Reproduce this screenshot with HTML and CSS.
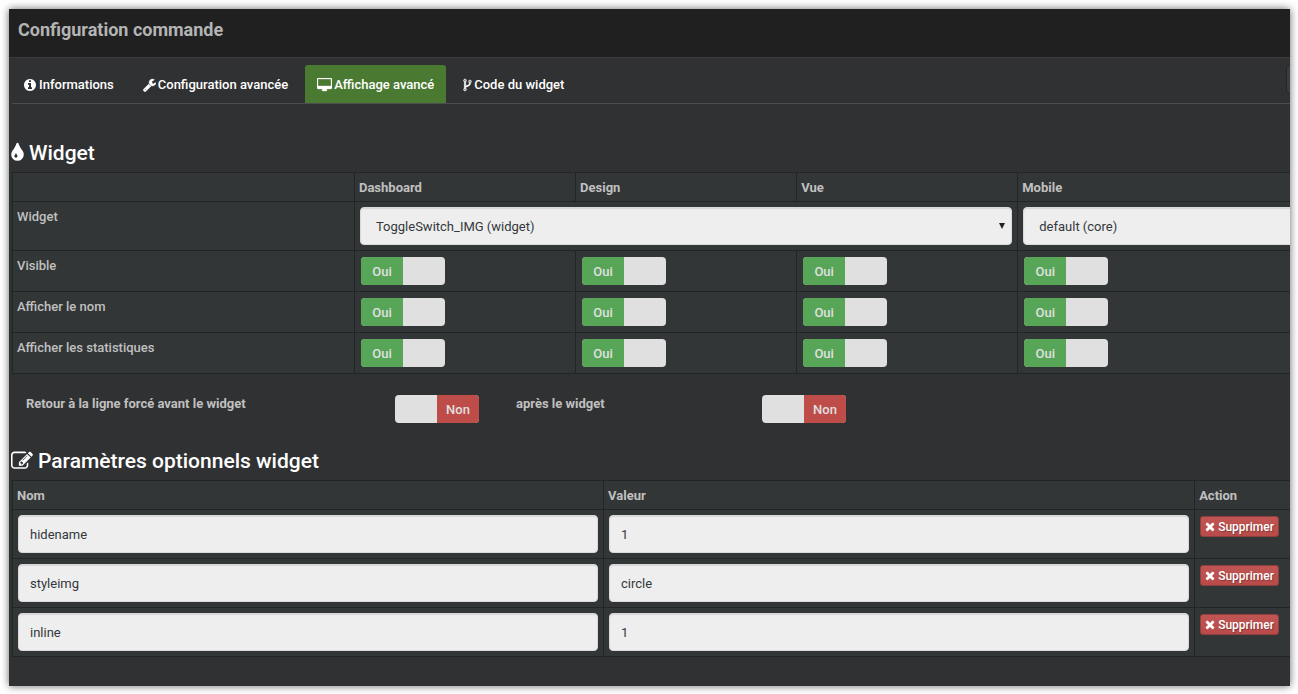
FILE: index.html
```html
<!DOCTYPE html>
<html lang="fr">
<head>
<meta charset="utf-8">
<title>Configuration commande</title>
<link rel="stylesheet" href="styles.css">
</head>
<body>
<svg class="defs" aria-hidden="true">
  <symbol id="info" viewBox="128 0 1536 1792"><path d="M1152 1376v-160q0-14-9-23t-23-9h-96v-512q0-14-9-23t-23-9h-320q-14 0-23 9t-9 23v160q0 14 9 23t23 9h96v320h-96q-14 0-23 9t-9 23v160q0 14 9 23t23 9h448q14 0 23-9t9-23zm-128-896v-160q0-14-9-23t-23-9h-192q-14 0-23 9t-9 23v160q0 14 9 23t23 9h192q14 0 23-9t9-23zm640 416q0 209-103 385.500t-279.500 279.500-385.500 103-385.500-103-279.500-279.500-103-385.500 103-385.500 279.500-279.500 385.500-103 385.500 103 279.500 279.500 103 385.500z"/></symbol>
  <symbol id="wrench" viewBox="64 0 1664 1792"><path d="M448 1472q0-26-19-45t-45-19-45 19-19 45 19 45 45 19 45-19 19-45zm644-420l-682 682q-37 37-90 37-52 0-91-37l-106-108q-38-36-38-90 0-53 38-91l681-681q39 98 114.500 173.500t173.500 114.500zm634-435q0 39-23 106-47 134-164.500 217.500t-258.500 83.500q-185 0-316.500-131.500t-131.500-316.500 131.500-316.500 316.500-131.500q58 0 121.500 16.500t107.500 46.500q16 11 16 28t-16 28l-293 169v224l193 107q5-3 79-48.500t135.500-81 70.500-35.500q15 0 23.500 10t8.500 25z"/></symbol>
  <symbol id="desktop" viewBox="-64 0 1920 1792"><path d="M1728 992v-832q0-13-9.500-22.500t-22.500-9.500h-1600q-13 0-22.500 9.500t-9.500 22.500v832q0 13 9.500 22.500t22.500 9.500h1600q13 0 22.500-9.500t9.500-22.500zm128-832v1088q0 66-47 113t-113 47h-544q0 37 16 77.500t32 71 16 43.500q0 26-19 45t-45 19h-512q-26 0-45-19t-19-45q0-14 16-44t32-70 16-78h-544q-66 0-113-47t-47-113v-1088q0-66 47-113t113-47h1600q66 0 113 47t47 113z"/></symbol>
  <symbol id="fork" viewBox="384 0 1024 1792"><path d="M672 1472q0-40-28-68t-68-28-68 28-28 68 28 68 68 28 68-28 28-68zm0-1152q0-40-28-68t-68-28-68 28-28 68 28 68 68 28 68-28 28-68zm640 128q0-40-28-68t-68-28-68 28-28 68 28 68 68 28 68-28 28-68zm96 0q0 52-26 96.500t-70 69.500q-2 287-226 414-67 38-203 81-128 40-169.500 71t-41.500 100v26q44 25 70 69.500t26 96.500q0 80-56 136t-136 56-136-56-56-136q0-52 26-96.500t70-69.500v-820q-44-25-70-69.500t-26-96.500q0-80 56-136t136-56 136 56 56 136q0 52-26 96.500t-70 69.500v497q54-26 154-57 55-17 87.500-29.500t70.500-31 59-39.500 40.500-51 28-69.500 8.500-91.500q-44-25-70-69.500t-26-96.500q0-80 56-136t136-56 136 56 56 136z"/></symbol>
  <symbol id="drop" viewBox="384 0 1024 1792"><path d="M896 1152q0-36-20-69-1-1-15.500-22.500t-25.500-38-25-44-21-50.500q-4-16-21-16t-21 16q-7 23-21 50.500t-25 44-25.500 38-15.500 22.500q-20 33-20 69 0 53 37.500 90.500t90.500 37.500 90.500-37.500 37.500-90.500zm512-128q0 212-150 362t-362 150-362-150-150-362q0-145 81-275 6-9 62.500-90.500t101-151 99.500-178 83-201.500q9-30 34-47t51-17 51.500 17 33.500 47q28 93 83 201.500t99.500 178 101 151 62.500 90.500q81 127 81 275z"/></symbol>
  <symbol id="edit" viewBox="0 0 1792 1792"><path d="M888 1184l116-116-152-152-116 116v56h96v96h56zm440-720q-16-16-33 1l-350 350q-17 17-1 33t33-1l350-350q17-17 1-33zm80 594v190q0 119-84.500 203.500t-203.500 84.500h-832q-119 0-203.500-84.500t-84.500-203.500v-832q0-119 84.500-203.500t203.500-84.500h832q63 0 117 25 15 7 18 23 3 17-9 29l-49 49q-14 14-32 8-23-6-45-6h-832q-66 0-113 47t-47 113v832q0 66 47 113t113 47h832q66 0 113-47t47-113v-126q0-13 9-22l64-64q15-15 35-7t20 29zm-96-738l288 288-672 672h-288v-288zm444 132l-92 92-288-288 92-92q28-28 68-28t68 28l152 152q28 28 28 68t-28 68z"/></symbol>
  <symbol id="times" viewBox="240 0 1312 1792"><path d="M1490 1322q0 40-28 68l-136 136q-28 28-68 28t-68-28l-294-294-294 294q-28 28-68 28t-68-28l-136-136q-28-28-28-68t28-68l294-294-294-294q-28-28-28-68t28-68l136-136q28-28 68-28t68 28l294 294 294-294q28-28 68-28t68 28l136 136q28 28 28 68t-28 68l-294 294 294 294q28 28 28 68z"/></symbol>
</svg>
<main class="dialog">
  <header class="titlebar"><h1 class="title">Configuration commande</h1></header>
  <div class="content">
    <nav class="tabs">
      <a class="tab" href="#info-tab"><svg class="icon w-info"><use href="#info"/></svg>Informations</a>
      <a class="tab" href="#config-tab"><svg class="icon w-wrench"><use href="#wrench"/></svg>Configuration avancée</a>
      <a class="tab active" href="#display-tab"><svg class="icon w-desktop"><use href="#desktop"/></svg>Affichage avancé</a>
      <a class="tab" href="#code-tab"><svg class="icon w-fork"><use href="#fork"/></svg>Code du widget</a>
      <button class="action" type="button" aria-label="Enregistrer"></button>
    </nav>

    <section class="section">
      <h2 class="heading"><svg class="big-icon w-drop"><use href="#drop"/></svg>Widget</h2>
      <table class="grid display">
        <colgroup><col class="c-name"><col class="c-view"><col class="c-view"><col class="c-view"><col></colgroup>
        <thead>
          <tr><th></th><th>Dashboard</th><th>Design</th><th>Vue</th><th>Mobile</th></tr>
        </thead>
        <tbody>
          <tr>
            <td>Widget</td>
            <td colspan="3"><div class="select"><select class="field" aria-label="Widget dashboard"><option>ToggleSwitch_IMG (widget)</option></select></div></td>
            <td><div class="select"><select class="field" aria-label="Widget mobile"><option>default (core)</option></select></div></td>
          </tr>
          <tr>
            <td>Visible</td>
            <td><label class="switch"><input type="checkbox" checked><span class="on">Oui</span></label></td>
            <td><label class="switch"><input type="checkbox" checked><span class="on">Oui</span></label></td>
            <td><label class="switch"><input type="checkbox" checked><span class="on">Oui</span></label></td>
            <td><label class="switch"><input type="checkbox" checked><span class="on">Oui</span></label></td>
          </tr>
          <tr>
            <td>Afficher le nom</td>
            <td><label class="switch"><input type="checkbox" checked><span class="on">Oui</span></label></td>
            <td><label class="switch"><input type="checkbox" checked><span class="on">Oui</span></label></td>
            <td><label class="switch"><input type="checkbox" checked><span class="on">Oui</span></label></td>
            <td><label class="switch"><input type="checkbox" checked><span class="on">Oui</span></label></td>
          </tr>
          <tr>
            <td>Afficher les statistiques</td>
            <td><label class="switch"><input type="checkbox" checked><span class="on">Oui</span></label></td>
            <td><label class="switch"><input type="checkbox" checked><span class="on">Oui</span></label></td>
            <td><label class="switch"><input type="checkbox" checked><span class="on">Oui</span></label></td>
            <td><label class="switch"><input type="checkbox" checked><span class="on">Oui</span></label></td>
          </tr>
        </tbody>
      </table>
      <div class="breaks">
        <label for="before">Retour à la ligne forcé avant le widget</label>
        <label class="switch"><input type="checkbox" id="before"><span class="off">Non</span></label>
        <label for="after">après le widget</label>
        <label class="switch"><input type="checkbox" id="after"><span class="off">Non</span></label>
      </div>
    </section>

    <section class="section">
      <h2 class="heading"><svg class="big-icon w-edit"><use href="#edit"/></svg>Paramètres optionnels widget</h2>
      <table class="grid params">
        <colgroup><col class="c-param"><col class="c-param"><col></colgroup>
        <thead><tr><th>Nom</th><th>Valeur</th><th>Action</th></tr></thead>
        <tbody>
          <tr>
            <td><input class="field" type="text" aria-label="Nom" value="hidename"></td>
            <td><input class="field" type="text" aria-label="Valeur" value="1"></td>
            <td><button class="remove" type="button"><svg class="x-icon"><use href="#times"/></svg>Supprimer</button></td>
          </tr>
          <tr>
            <td><input class="field" type="text" aria-label="Nom" value="styleimg"></td>
            <td><input class="field" type="text" aria-label="Valeur" value="circle"></td>
            <td><button class="remove" type="button"><svg class="x-icon"><use href="#times"/></svg>Supprimer</button></td>
          </tr>
          <tr>
            <td><input class="field" type="text" aria-label="Nom" value="inline"></td>
            <td><input class="field" type="text" aria-label="Valeur" value="1"></td>
            <td><button class="remove" type="button"><svg class="x-icon"><use href="#times"/></svg>Supprimer</button></td>
          </tr>
        </tbody>
      </table>
    </section>
  </div>
</main>
</body>
</html>
```

FILE: styles.css
```css
*, *::before, *::after { box-sizing: border-box; }
body {
  margin: 0;
  padding: 9px 8px 8px 9px;
  background: #fff;
  color: #c0c0c0;
  font: 500 13px/20px Roboto, "Liberation Sans", sans-serif;
}
.defs { position: absolute; width: 0; height: 0; }
.dialog {
  overflow: hidden;
  background: #303132;
  box-shadow: 0 0 8px rgba(0, 0, 0, 0.6);
}
.titlebar {
  padding: 10px 9px 17px;
  background: #202020;
  border-bottom: 1px solid #3d3a39;
}
.title { margin: 0; color: #b4b4b4; font-size: 18px; line-height: 21px; font-weight: 700; }
.content { padding: 7px 0 29px 3px; }

.tabs { display: flex; gap: 5px; align-items: flex-start; border-bottom: 1px solid #4b4d4e; }
.tab {
  display: flex;
  align-items: center;
  gap: 2px;
  height: 38px;
  padding: 2px 12px 0;
  border-radius: 3px 3px 0 0;
  color: #fff;
  text-decoration: none;
}
.tab.active { background: #4a7a32; }
.icon { height: 14px; fill: #fff; stroke: #fff; stroke-width: 40px; }
.w-info { width: 12px; stroke: none; }
.w-wrench { width: 13px; }
.w-desktop { width: 15px; }
.w-fork { width: 9px; }
.tab .w-info { margin-right: 1px; }
.action {
  flex: none;
  width: 60px;
  height: 29px;
  margin: 0 -56px 0 auto;
  border: 1px solid #242526;
  border-radius: 4px;
  background: #3b3c3d;
}

.heading {
  display: flex;
  align-items: center;
  gap: 5px;
  margin: 0 0 6px -1px;
  color: #fff;
  font-size: 21px;
  line-height: 26px;
  font-weight: 500;
}
.tabs + .section { padding-top: 36px; }
.big-icon { height: 22px; fill: #fff; }
.w-drop { width: 13px; }
.w-edit { width: 22px; }

.grid {
  width: calc(100% + 197px);
  table-layout: fixed;
  border: 1px solid #2a2e2f;
  border-collapse: collapse;
  background: #323637;
}
.c-name { width: 23.2%; }
.c-view { width: 15%; }
.c-param { width: 40.1%; }
.grid th, .grid td {
  padding: 5px;
  border: 1px solid #212526;
  text-align: left;
  vertical-align: top;
}
.grid th { padding: 5px 4px 3px; font-weight: 700; }
.display td:first-child { padding-left: 4px; }

.field {
  display: block;
  width: 100%;
  height: 38px;
  padding: 0 11px;
  border: 1px solid #d9d9d9;
  border-radius: 4px;
  background: #eee;
  box-shadow: inset 0 1px 1px rgba(0, 0, 0, 0.1);
  color: #34383c;
  font: 400 13px/20px Roboto, "Liberation Sans", sans-serif;
}
select.field { appearance: none; padding: 1px 0 0 15px; }
.select { position: relative; }
.select::after {
  content: "";
  position: absolute;
  top: 16px;
  right: 7px;
  border: 3px solid transparent;
  border-top: 6px solid #222;
  border-bottom: 0;
}

.switch {
  position: relative;
  display: flex;
  width: 84px;
  height: 28px;
  margin: 1px;
  overflow: hidden;
  border-radius: 4px;
  background: #e0e0e0;
  color: #e0e0e0;
  line-height: 29px;
  text-align: center;
}
.switch input { position: absolute; inset: 0; margin: 0; opacity: 0; }
.on, .off { width: 50%; }
.on { background: #57a557; }
.off { margin-left: auto; background: #be4d4a; }

.breaks {
  display: grid;
  grid-template-columns: 368px 122px 245px 86px;
  padding: 20px 0 24px 14px;
  font-weight: 700;
}
.breaks .switch { font-weight: 500; }

.remove {
  display: flex;
  align-items: center;
  gap: 3px;
  height: 21px;
  margin: 1px 0 0;
  padding: 0 4px;
  border: 1px solid #8f3f3d;
  border-radius: 3px;
  background: linear-gradient(#c05553, #b84b49);
  color: #fff;
  font: 500 12px/18px Roboto, "Liberation Sans", sans-serif;
  text-shadow: 1px 1px 1px rgba(0, 0, 0, 0.3);
}
.x-icon { width: 10px; height: 13px; fill: #fff; }
```
